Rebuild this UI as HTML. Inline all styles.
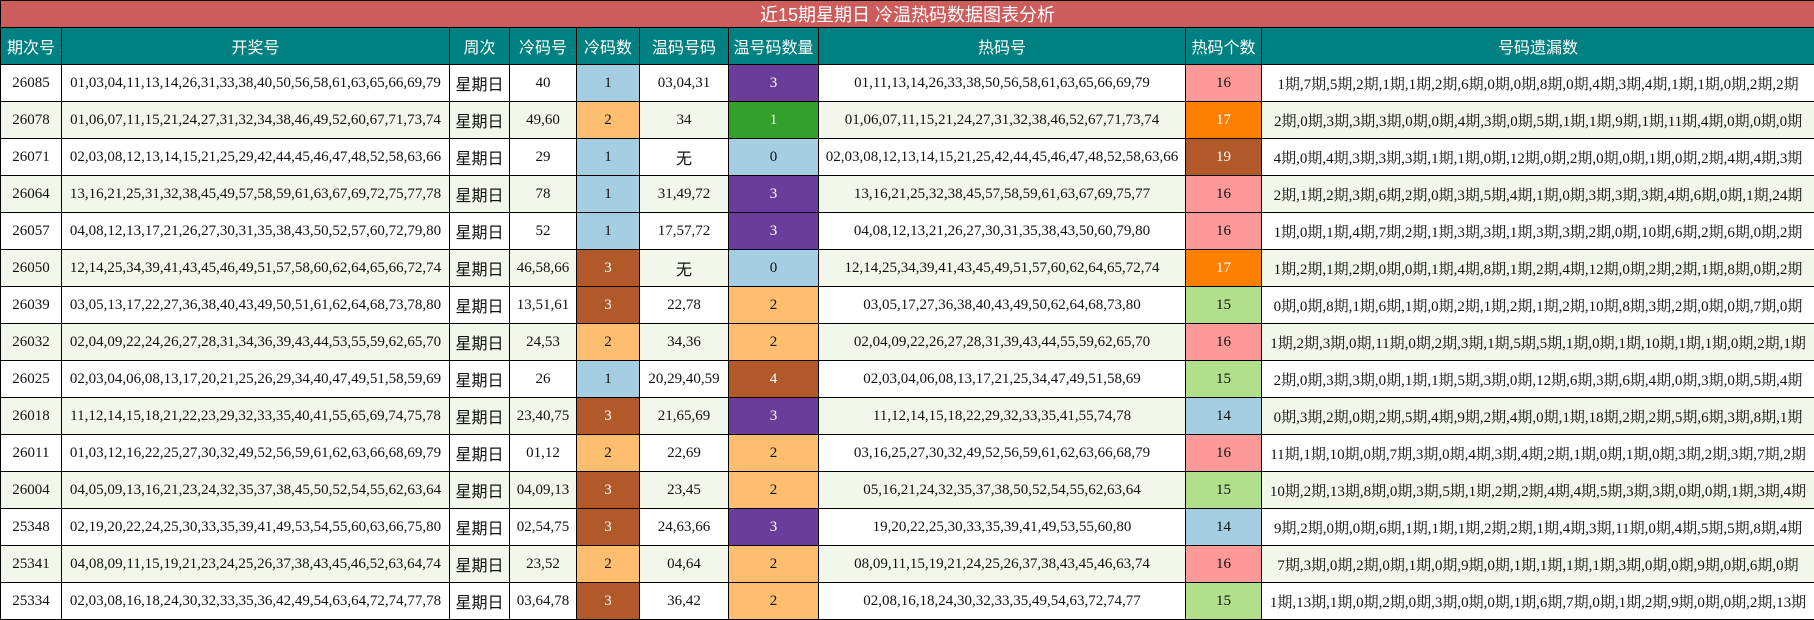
<!DOCTYPE html>
<html><head><meta charset="utf-8"><style>
body{margin:0;width:1814px;height:620px;overflow:hidden;background:#fff}
table{border-collapse:collapse;table-layout:fixed;width:1814px}
td,th{border:1px solid #000;text-align:center;padding:0;white-space:nowrap;overflow:hidden}
.t td{background:#cd5c5c;color:#fff;height:25px;font:18px "Liberation Sans","Noto Sans CJK SC",sans-serif;border:1px solid #000}
th{background:#008080;color:#fff;height:36px;font:normal 16px "Liberation Sans","Noto Sans CJK SC",sans-serif}
td{height:36px;font:15px "Liberation Serif","Noto Serif CJK SC",serif;color:#111}
tr.e td{background:#f1f7ea}
.w{font-family:"Noto Sans CJK SC",sans-serif;font-size:16px}
.b{background:#a6cee3!important}.o{background:#fdbf6f!important}.r{background:#b15928!important;color:#fff}
.p{background:#6a3d9a!important;color:#fff}.g{background:#33a02c!important;color:#fff}
.k{background:#fb9a99!important}.f{background:#ff7f00!important;color:#fff}.l{background:#b2df8a!important}
</style></head><body>
<table>
<colgroup><col style="width:61px"><col style="width:388px"><col style="width:60px"><col style="width:67px"><col style="width:63px"><col style="width:89px"><col style="width:90px"><col style="width:367px"><col style="width:76px"><col style="width:553px"></colgroup>
<tr class="t"><td colspan="10">近15期星期日 冷温热码数据图表分析</td></tr>
<tr><th>期次号</th><th>开奖号</th><th>周次</th><th>冷码号</th><th>冷码数</th><th>温码号码</th><th>温号码数量</th><th>热码号</th><th>热码个数</th><th>号码遗漏数</th></tr>
<tr><td>26085</td><td>01,03,04,11,13,14,26,31,33,38,40,50,56,58,61,63,65,66,69,79</td><td class="w">星期日</td><td>40</td><td class="b">1</td><td>03,04,31</td><td class="p">3</td><td>01,11,13,14,26,33,38,50,56,58,61,63,65,66,69,79</td><td class="k">16</td><td>1期,7期,5期,2期,1期,1期,2期,6期,0期,0期,8期,0期,4期,3期,4期,1期,1期,0期,2期,2期</td></tr>
<tr class="e"><td>26078</td><td>01,06,07,11,15,21,24,27,31,32,34,38,46,49,52,60,67,71,73,74</td><td class="w">星期日</td><td>49,60</td><td class="o">2</td><td>34</td><td class="g">1</td><td>01,06,07,11,15,21,24,27,31,32,38,46,52,67,71,73,74</td><td class="f">17</td><td>2期,0期,3期,3期,3期,0期,0期,4期,3期,0期,5期,1期,1期,9期,1期,11期,4期,0期,0期,0期</td></tr>
<tr><td>26071</td><td>02,03,08,12,13,14,15,21,25,29,42,44,45,46,47,48,52,58,63,66</td><td class="w">星期日</td><td>29</td><td class="b">1</td><td class="w">无</td><td class="b">0</td><td>02,03,08,12,13,14,15,21,25,42,44,45,46,47,48,52,58,63,66</td><td class="r">19</td><td>4期,0期,4期,3期,3期,3期,1期,1期,0期,12期,0期,2期,0期,0期,1期,0期,2期,4期,4期,3期</td></tr>
<tr class="e"><td>26064</td><td>13,16,21,25,31,32,38,45,49,57,58,59,61,63,67,69,72,75,77,78</td><td class="w">星期日</td><td>78</td><td class="b">1</td><td>31,49,72</td><td class="p">3</td><td>13,16,21,25,32,38,45,57,58,59,61,63,67,69,75,77</td><td class="k">16</td><td>2期,1期,2期,3期,6期,2期,0期,3期,5期,4期,1期,0期,3期,3期,3期,4期,6期,0期,1期,24期</td></tr>
<tr><td>26057</td><td>04,08,12,13,17,21,26,27,30,31,35,38,43,50,52,57,60,72,79,80</td><td class="w">星期日</td><td>52</td><td class="b">1</td><td>17,57,72</td><td class="p">3</td><td>04,08,12,13,21,26,27,30,31,35,38,43,50,60,79,80</td><td class="k">16</td><td>1期,0期,1期,4期,7期,2期,1期,3期,3期,1期,3期,3期,2期,0期,10期,6期,2期,6期,0期,2期</td></tr>
<tr class="e"><td>26050</td><td>12,14,25,34,39,41,43,45,46,49,51,57,58,60,62,64,65,66,72,74</td><td class="w">星期日</td><td>46,58,66</td><td class="r">3</td><td class="w">无</td><td class="b">0</td><td>12,14,25,34,39,41,43,45,49,51,57,60,62,64,65,72,74</td><td class="f">17</td><td>1期,2期,1期,2期,0期,0期,1期,4期,8期,1期,2期,4期,12期,0期,2期,2期,1期,8期,0期,2期</td></tr>
<tr><td>26039</td><td>03,05,13,17,22,27,36,38,40,43,49,50,51,61,62,64,68,73,78,80</td><td class="w">星期日</td><td>13,51,61</td><td class="r">3</td><td>22,78</td><td class="o">2</td><td>03,05,17,27,36,38,40,43,49,50,62,64,68,73,80</td><td class="l">15</td><td>0期,0期,8期,1期,6期,1期,0期,2期,1期,2期,1期,2期,10期,8期,3期,2期,0期,0期,7期,0期</td></tr>
<tr class="e"><td>26032</td><td>02,04,09,22,24,26,27,28,31,34,36,39,43,44,53,55,59,62,65,70</td><td class="w">星期日</td><td>24,53</td><td class="o">2</td><td>34,36</td><td class="o">2</td><td>02,04,09,22,26,27,28,31,39,43,44,55,59,62,65,70</td><td class="k">16</td><td>1期,2期,3期,0期,11期,0期,2期,3期,1期,5期,5期,1期,0期,1期,10期,1期,1期,0期,2期,1期</td></tr>
<tr><td>26025</td><td>02,03,04,06,08,13,17,20,21,25,26,29,34,40,47,49,51,58,59,69</td><td class="w">星期日</td><td>26</td><td class="b">1</td><td>20,29,40,59</td><td class="r">4</td><td>02,03,04,06,08,13,17,21,25,34,47,49,51,58,69</td><td class="l">15</td><td>2期,0期,3期,3期,0期,1期,1期,5期,3期,0期,12期,6期,3期,6期,4期,0期,3期,0期,5期,4期</td></tr>
<tr class="e"><td>26018</td><td>11,12,14,15,18,21,22,23,29,32,33,35,40,41,55,65,69,74,75,78</td><td class="w">星期日</td><td>23,40,75</td><td class="r">3</td><td>21,65,69</td><td class="p">3</td><td>11,12,14,15,18,22,29,32,33,35,41,55,74,78</td><td class="b">14</td><td>0期,3期,2期,0期,2期,5期,4期,9期,2期,4期,0期,1期,18期,2期,2期,5期,6期,3期,8期,1期</td></tr>
<tr><td>26011</td><td>01,03,12,16,22,25,27,30,32,49,52,56,59,61,62,63,66,68,69,79</td><td class="w">星期日</td><td>01,12</td><td class="o">2</td><td>22,69</td><td class="o">2</td><td>03,16,25,27,30,32,49,52,56,59,61,62,63,66,68,79</td><td class="k">16</td><td>11期,1期,10期,0期,7期,3期,0期,4期,3期,4期,2期,1期,0期,1期,0期,3期,2期,3期,7期,2期</td></tr>
<tr class="e"><td>26004</td><td>04,05,09,13,16,21,23,24,32,35,37,38,45,50,52,54,55,62,63,64</td><td class="w">星期日</td><td>04,09,13</td><td class="r">3</td><td>23,45</td><td class="o">2</td><td>05,16,21,24,32,35,37,38,50,52,54,55,62,63,64</td><td class="l">15</td><td>10期,2期,13期,8期,0期,3期,5期,1期,2期,2期,4期,4期,5期,3期,3期,0期,0期,1期,3期,4期</td></tr>
<tr><td>25348</td><td>02,19,20,22,24,25,30,33,35,39,41,49,53,54,55,60,63,66,75,80</td><td class="w">星期日</td><td>02,54,75</td><td class="r">3</td><td>24,63,66</td><td class="p">3</td><td>19,20,22,25,30,33,35,39,41,49,53,55,60,80</td><td class="b">14</td><td>9期,2期,0期,0期,6期,1期,1期,1期,2期,2期,1期,4期,3期,11期,0期,4期,5期,5期,8期,4期</td></tr>
<tr class="e"><td>25341</td><td>04,08,09,11,15,19,21,23,24,25,26,37,38,43,45,46,52,63,64,74</td><td class="w">星期日</td><td>23,52</td><td class="o">2</td><td>04,64</td><td class="o">2</td><td>08,09,11,15,19,21,24,25,26,37,38,43,45,46,63,74</td><td class="k">16</td><td>7期,3期,0期,2期,0期,1期,0期,9期,0期,1期,1期,1期,1期,3期,0期,0期,9期,0期,6期,0期</td></tr>
<tr><td>25334</td><td>02,03,08,16,18,24,30,32,33,35,36,42,49,54,63,64,72,74,77,78</td><td class="w">星期日</td><td>03,64,78</td><td class="r">3</td><td>36,42</td><td class="o">2</td><td>02,08,16,18,24,30,32,33,35,49,54,63,72,74,77</td><td class="l">15</td><td>1期,13期,1期,0期,2期,0期,3期,0期,0期,1期,6期,7期,0期,1期,2期,9期,0期,0期,2期,13期</td></tr>
</table>
</body></html>
